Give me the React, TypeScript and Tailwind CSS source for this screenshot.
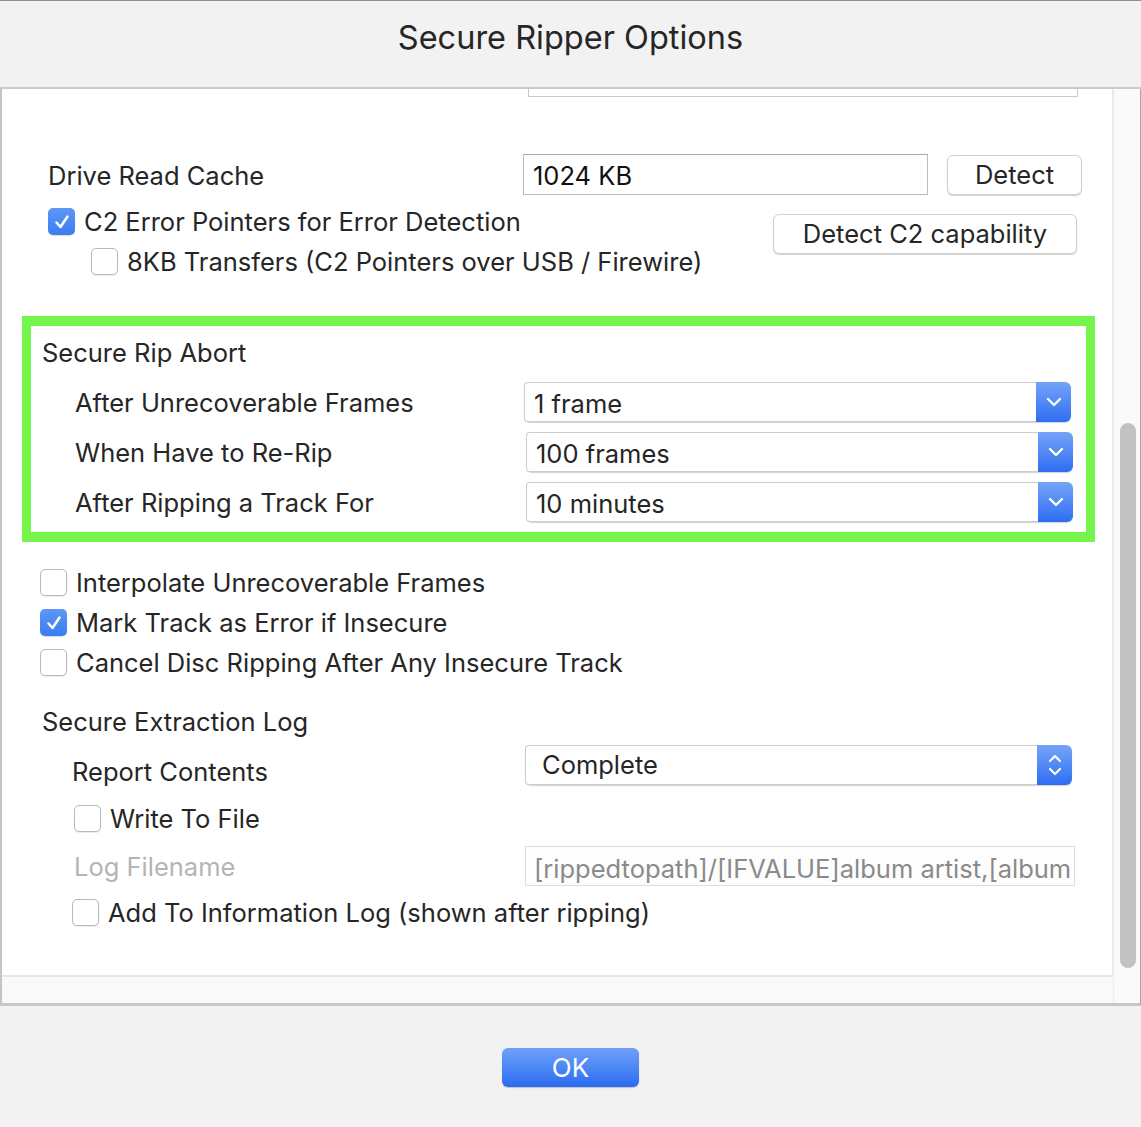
import React from "react";

const font = { fontFamily: "Inter, 'Noto Sans', sans-serif" };

const CheckMark = () => (
  <svg width="18" height="18" viewBox="0 0 18 18" fill="none">
    <path d="M3.5 9.5 L7.5 14 L14.5 3.5" stroke="white" strokeWidth="2.5" strokeLinecap="round" strokeLinejoin="round" />
  </svg>
);

const Checkbox = ({ checked = false }: { checked?: boolean }) =>
  checked ? (
    <div className="w-[27px] h-[27px] shrink-0 rounded-[5px] bg-linear-to-b from-[#5c97f6] to-[#3a7cf2] flex items-center justify-center shadow-[0_1px_1px_rgba(0,0,0,0.15)]">
      <CheckMark />
    </div>
  ) : (
    <div className="w-[27px] h-[27px] shrink-0 rounded-[5px] bg-white border border-[#b9b9b9] shadow-[0_1px_1px_rgba(0,0,0,0.08)]" />
  );

const CheckRow = ({ checked, label, className = "" }: { checked?: boolean; label: string; className?: string }) => (
  <div className={`flex items-center h-[27px] ${className}`}>
    <Checkbox checked={checked} />
    <span className="ml-[9px] whitespace-nowrap">{label}</span>
  </div>
);

const ChevronDown = () => (
  <svg width="16" height="10" viewBox="0 0 16 10" fill="none">
    <path d="M2 2 L8 8 L14 2" stroke="white" strokeWidth="2.4" strokeLinecap="round" strokeLinejoin="round" />
  </svg>
);

const ChevronUpDown = () => (
  <svg width="14" height="26" viewBox="0 0 14 26" fill="none">
    <path d="M2 9 L7 4 L12 9" stroke="white" strokeWidth="2.2" strokeLinecap="round" strokeLinejoin="round" />
    <path d="M2 17 L7 22 L12 17" stroke="white" strokeWidth="2.2" strokeLinecap="round" strokeLinejoin="round" />
  </svg>
);

const Popup = ({ value, updown = false, className = "" }: { value: string; updown?: boolean; className?: string }) => (
  <div className={`flex h-[40px] w-[547px] shrink-0 rounded-[6px] shadow-[0_1px_1px_rgba(0,0,0,0.18)] ${className}`}>
    <div className={`flex-1 flex items-center bg-white border border-[#cdcdcd] border-r-0 rounded-l-[4px] ${updown ? "pl-[16px]" : "pl-[9px] pt-[4px]"}`}>
      {value}
    </div>
    <div className="w-[35px] rounded-r-[6px] bg-linear-to-b from-[#75a3f7] to-[#2d6df2] flex items-center justify-center">
      {updown ? <ChevronUpDown /> : <ChevronDown />}
    </div>
  </div>
);

const PushButton = ({ label, className = "" }: { label: string; className?: string }) => (
  <div className={`h-[40px] shrink-0 flex items-center justify-center bg-white border border-[#d0d0d0] rounded-[6px] shadow-[0_1px_1px_rgba(0,0,0,0.18)] ${className}`}>
    {label}
  </div>
);

export default function App() {
  return (
    <div className="w-[1141px] h-[1127px] bg-[#f2f2f2] text-[#262626] text-[25.5px] leading-[30px] flex flex-col overflow-hidden" style={font}>
      {/* title bar */}
      <div className="h-[89px] shrink-0 border-t border-[#8f8f8f] border-b-2 border-b-[#cbcbcb] flex items-center justify-center pb-[12px] text-[32.5px]">
        Secure Ripper Options
      </div>

      {/* scroll frame */}
      <div className="h-[917px] shrink-0 flex border-l-2 border-[#c4c4c4] border-b-[3px] border-b-[#c7c7c7] border-r border-r-[#a8a8a8]">
        <div className="w-[1111px] flex flex-col">
          <div className="h-[886px] bg-white border-r border-[#e7e7e7] overflow-hidden flex flex-col">
            <div className="ml-[526px] w-[550px] h-[41px] -mt-[33px] border border-[#c9c9c9] shrink-0" />

            {/* drive read cache */}
            <div className="mt-[57px] flex items-center h-[41px] pl-[46px]">
              <div className="w-[475px] pt-[2px]">Drive Read Cache</div>
              <div className="w-[405px] h-[41px] border border-[#bcbcbc] border-t-[#a9a9a9] flex items-center pl-[9px] pt-[3px] text-[#111]">
                1024 KB
              </div>
              <PushButton label="Detect" className="ml-[19px] w-[135px] h-[39px]" />
            </div>

            {/* c2 block */}
            <div className="mt-[13px] flex pl-[46px]">
              <div className="flex flex-col gap-[13px]">
                <CheckRow checked label="C2 Error Pointers for Error Detection" />
                <CheckRow label="8KB Transfers (C2 Pointers over USB / Firewire)" className="ml-[43px]" />
              </div>
              <PushButton label="Detect C2 capability" className="ml-auto mr-[35px] mt-[6px] w-[304px]" />
            </div>

            {/* secure rip abort */}
            <div className="mt-[41px] ml-[20px] w-[1073px] h-[226px] border-x-[9px] border-y-[10px] border-[#75f44c] flex flex-col pt-[12px] pl-[11px]">
              <div className="h-[30px]">Secure Rip Abort</div>
              <div className="mt-[14px] flex flex-col gap-[10px] pl-[33px]">
                <div className="flex items-center h-[40px]">
                  <div className="w-[449px] pt-[1px]">After Unrecoverable Frames</div>
                  <Popup value="1 frame" />
                </div>
                <div className="flex items-center h-[40px]">
                  <div className="w-[449px] pt-[1px]">When Have to Re-Rip</div>
                  <Popup value="100 frames" className="ml-[2px]" />
                </div>
                <div className="flex items-center h-[40px]">
                  <div className="w-[449px] pt-[1px]">After Ripping a Track For</div>
                  <Popup value="10 minutes" className="ml-[2px]" />
                </div>
              </div>
            </div>

            {/* options */}
            <div className="mt-[27px] pl-[38px] flex flex-col gap-[13px]">
              <CheckRow label="Interpolate Unrecoverable Frames" />
              <CheckRow checked label="Mark Track as Error if Insecure" />
              <CheckRow label="Cancel Disc Ripping After Any Insecure Track" />
            </div>

            {/* secure extraction log */}
            <div className="mt-[31px] pl-[40px] h-[30px]">Secure Extraction Log</div>
            <div className="mt-[8px] flex h-[40px] pl-[70px]">
              <div className="w-[453px] pt-[12px]">Report Contents</div>
              <Popup value="Complete" updown />
            </div>
            <CheckRow label="Write To File" className="mt-[20px] ml-[72px]" />
            <div className="mt-[14px] flex items-center h-[40px] pl-[72px]">
              <div className="w-[451px] pt-[2px] text-[#b4b4b4]">Log Filename</div>
              <div className="w-[550px] h-[40px] border border-[#dedede] bg-[#fdfdfd] flex items-center pl-[8px] pt-[5px] text-[#8a8a8a] overflow-hidden whitespace-nowrap">
                [rippedtopath]/[IFVALUE]album artist,[album
              </div>
            </div>
            <CheckRow label="Add To Information Log (shown after ripping)" className="mt-[13px] ml-[70px]" />
          </div>
          <div className="flex-1 bg-[#f9f9f9] border-t-2 border-[#e6e6e6]" />
        </div>

        {/* scrollbar */}
        <div className="flex-1 bg-[#fafafa] border-l border-[#eeeeee] pl-[6px]">
          <div className="mt-[334px] w-[16px] h-[545px] rounded-full bg-[#c2c2c2]" />
        </div>
      </div>

      {/* footer */}
      <div className="flex-1 flex justify-center pt-[42px]">
        <div className="w-[137px] h-[39px] rounded-[6px] bg-linear-to-b from-[#6fa1f8] to-[#2a6bf2] shadow-[0_1px_1px_rgba(0,0,0,0.2)] flex items-center justify-center text-white text-[26px]">
          OK
        </div>
      </div>
    </div>
  );
}
